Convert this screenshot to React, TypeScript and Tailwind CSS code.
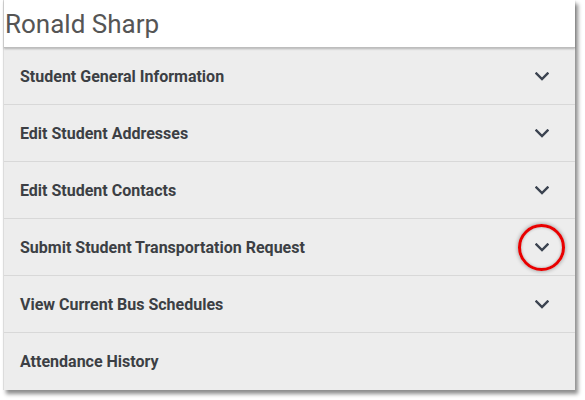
import React from "react";

const rows = [
  "Student General Information",
  "Edit Student Addresses",
  "Edit Student Contacts",
  "Submit Student Transportation Request",
  "View Current Bus Schedules",
  "Attendance History",
];

function Chevron() {
  return (
    <svg width="14" height="9" viewBox="0 0 14 9" className="block">
      <polyline points="1.5,1.5 7,7 12.5,1.5" fill="none" stroke="#3b4350" strokeWidth="2.4" strokeLinecap="square" />
    </svg>
  );
}

export default function App() {
  return (
    <div className="w-[585px] h-[400px] bg-white relative" style={{ fontFamily: "Roboto, 'Liberation Sans', sans-serif" }}>
      <div className="ml-[3px] w-[572px] bg-[#ededed] shadow-[3px_4px_4px_rgba(0,0,0,0.45)] border-l border-[#dcdcdc]">
        <div className="h-[48px] bg-white flex items-center pl-[1px] border-b border-[#bdbdbd] shadow-[0_1px_2px_rgba(0,0,0,0.25)] relative z-10">
          <span className="text-[26px] text-[#555555] leading-none">Ronald Sharp</span>
        </div>
        {rows.map((r, i) => (
          <div
            key={r}
            className={`h-[57px] flex items-center justify-between pl-[16px] pr-[26px] ${i < rows.length - 1 ? "border-b border-[#d8d8d8]" : ""}`}
          >
            <span className="text-[16px] font-bold text-[#3c3f44] mt-[1px]">{r}</span>
            {i < rows.length - 1 && <Chevron />}
          </div>
        ))}
      </div>
      <div className="absolute left-[518px] top-[224px] w-[47px] h-[47px] rounded-full border-[3px] border-[#e80000] shadow-[0_0_4px_rgba(0,0,0,0.4),inset_0_0_3px_rgba(0,0,0,0.3)]" />
    </div>
  );
}
